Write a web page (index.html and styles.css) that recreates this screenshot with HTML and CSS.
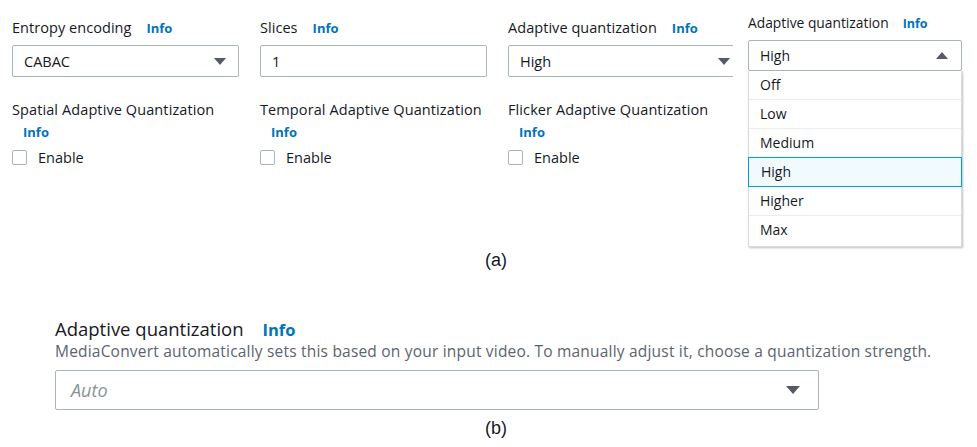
FILE: index.html
```html
<!DOCTYPE html>
<html>
<head>
<meta charset="utf-8">
<link rel="stylesheet" href="styles.css">
</head>
<body>
<div class="part-a">
  <div class="top">
    <div class="grid">
      <div class="field">
        <div class="label-row"><span class="label">Entropy encoding</span><span class="info">Info</span></div>
        <div class="select"><span>CABAC</span><span class="caret down"></span></div>
      </div>
      <div class="field">
        <div class="label-row"><span class="label">Slices</span><span class="info">Info</span></div>
        <div class="select"><span>1</span></div>
      </div>
      <div class="field clip">
        <div class="label-row"><span class="label">Adaptive quantization</span><span class="info">Info</span></div>
        <div class="select wide"><span>High</span><span class="caret down"></span></div>
      </div>
      <div class="field">
        <div class="label2">Spatial Adaptive Quantization</div>
        <div class="info info2">Info</div>
        <label class="check"><span class="box"></span><span>Enable</span></label>
      </div>
      <div class="field">
        <div class="label2">Temporal Adaptive Quantization</div>
        <div class="info info2">Info</div>
        <label class="check"><span class="box"></span><span>Enable</span></label>
      </div>
      <div class="field">
        <div class="label2">Flicker Adaptive Quantization</div>
        <div class="info info2">Info</div>
        <label class="check"><span class="box"></span><span>Enable</span></label>
      </div>
    </div>
    <div class="col4">
      <div class="label-row small"><span class="label">Adaptive quantization</span><span class="info">Info</span></div>
      <div class="select open"><span>High</span><span class="caret up"></span></div>
      <ul class="list">
        <li>Off</li>
        <li>Low</li>
        <li>Medium</li>
        <li class="sel">High</li>
        <li>Higher</li>
        <li>Max</li>
      </ul>
    </div>
  </div>
  <div class="caption cap-a">(a)</div>
</div>
<div class="part-b">
  <div class="b-label-row"><span class="b-label">Adaptive quantization</span><span class="b-info">Info</span></div>
  <div class="b-desc">MediaConvert automatically sets this based on your input video. To manually adjust it, choose a quantization strength.</div>
  <div class="b-select"><span class="placeholder">Auto</span><span class="caret down big"></span></div>
  <div class="caption cap-b">(b)</div>
</div>
</body>
</html>
```

FILE: styles.css
```css
* { box-sizing: border-box; }
html, body { margin: 0; padding: 0; background: #fff; }
body {
  width: 977px;
  height: 447px;
  overflow: hidden;
  font-family: "Open Sans", "Liberation Sans", sans-serif;
  color: #16191f;
}
.part-a { padding: 14px 0 0 12px; }
.top { display: flex; align-items: flex-start; }
.grid {
  display: grid;
  grid-template-columns: 227px 227px 225px;
  column-gap: 21px;
  padding-top: 4px;
}
.field { display: flex; flex-direction: column; }
.clip { overflow: hidden; }
.label-row { display: flex; align-items: baseline; height: 20px; line-height: 20px; }
.label { font-size: 14.5px; letter-spacing: 0.05px; white-space: nowrap; }
.info { font-size: 13px; font-weight: 700; color: #0073bb; margin-left: 15px; }
.select {
  margin-top: 7px;
  height: 32px;
  border: 1px solid #aab7b8;
  border-radius: 2px;
  display: flex;
  align-items: center;
  justify-content: space-between;
  padding: 0 12px 0 11px;
  font-size: 14.5px;
}
.select.wide { width: 235px; }
.caret { width: 0; height: 0; border-left: 6px solid transparent; border-right: 6px solid transparent; }
.caret.down { border-top: 7px solid #545b64; }
.caret.up { border-bottom: 7px solid #545b64; }
.caret.big { border-left-width: 7px; border-right-width: 7px; border-top-width: 8px; }
.label2 { margin-top: 23px; font-size: 14.5px; line-height: 20px; letter-spacing: 0.1px; white-space: nowrap; }
.info2 { margin: 3px 0 0 11px; line-height: 18px; }
.check { display: flex; align-items: center; margin-top: 6px; height: 20px; font-size: 14.5px; }
.box {
  width: 15px; height: 15px;
  border: 1px solid #aab7b8;
  border-radius: 2px;
  margin-right: 11px;
}
.col4 { margin-left: 15px; width: 214px; }
.label-row.small { height: 18px; line-height: 18px; }
.small .label { font-size: 13.8px; letter-spacing: 0; }
.small .info { font-size: 12.5px; margin-left: 14px; }
.select.open { margin-top: 8px; height: 31px; padding: 0 13px 0 11px; font-size: 14px; }
.list {
  list-style: none;
  margin: 0;
  padding: 0;
  border: 1px solid #d5dbdb;
  border-top: none;
  box-shadow: 1px 1px 2px rgba(0,0,0,0.25);
  font-size: 14px;
}
.list li {
  height: 29px;
  line-height: 28px;
  padding-left: 11px;
  border-bottom: 1px solid #eaeded;
}
.list li:last-child { border-bottom: none; height: 30px; }
.list li.sel { background: #f1faff; border: 1px solid #00a1c9; margin: -1px -1px 0 -1px; padding-left: 12px; height: 30px; }
.caption {
  font-family: "Liberation Sans", Arial, sans-serif;
  font-size: 18px;
  line-height: 22px;
  text-align: center;
  color: #16191f;
}
.cap-a { margin-top: 2px; margin-left: -12px; padding-left: 15px; }
.part-b { padding-left: 55px; margin-top: 46px; }
.b-label-row { display: flex; align-items: baseline; height: 24px; line-height: 24px; }
.b-label { font-size: 18.5px; }
.b-info { font-size: 16.5px; font-weight: 700; color: #0073bb; margin-left: 19px; }
.b-desc { margin-top: 0; font-size: 15.5px; line-height: 21px; color: #5b6470; letter-spacing: 0.2px; white-space: nowrap; }
.b-select {
  margin-top: 8px;
  width: 764px;
  height: 40px;
  border: 1px solid #aab7b8;
  border-radius: 2px;
  display: flex;
  align-items: center;
  justify-content: space-between;
  padding: 0 18px 0 15px;
}
.placeholder { font-size: 18px; font-style: italic; color: #879596; }
.cap-b { margin-top: 7px; margin-left: -55px; padding-left: 15px; }
```
